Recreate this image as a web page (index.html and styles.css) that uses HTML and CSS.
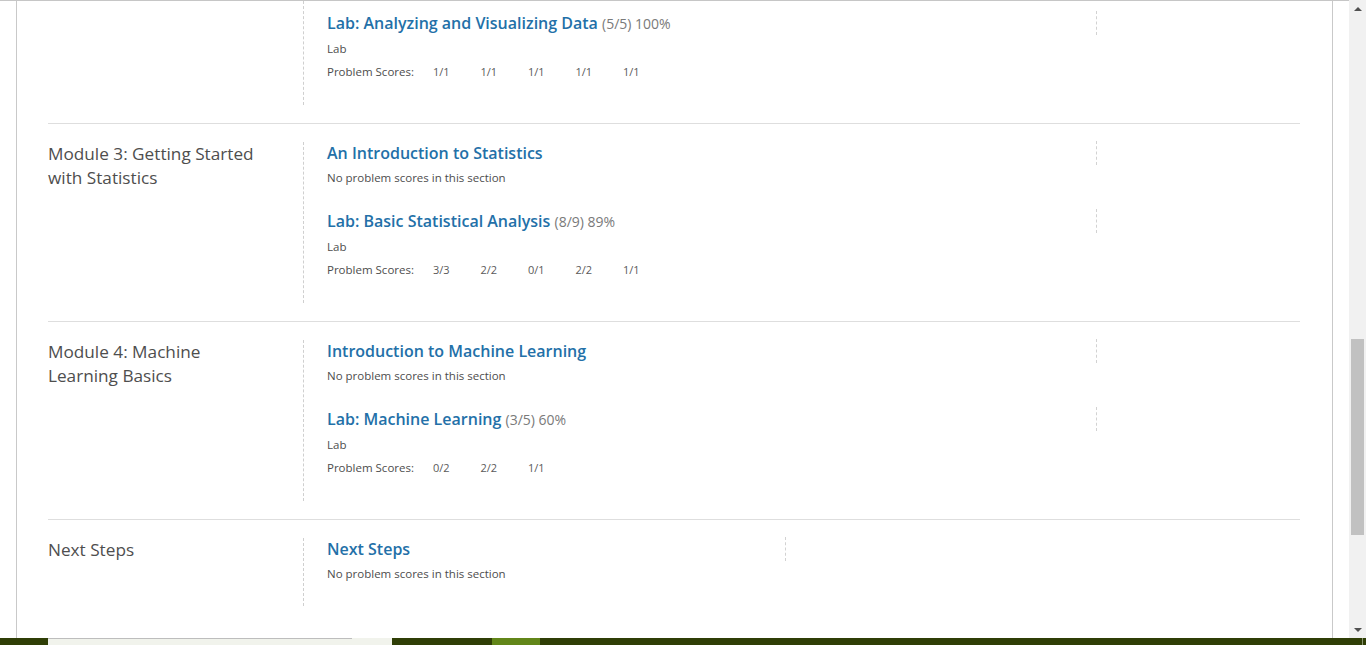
FILE: index.html
```html
<!DOCTYPE html>
<html lang="en">
<head>
<meta charset="utf-8">
<title>Progress</title>
<link rel="stylesheet" href="styles.css">
</head>
<body>
<div class="viewport">
  <div class="page">
    <main class="progress">
      <section class="chapter chapter--clipped">
        <h2 class="chapter-name"></h2>
        <div class="sections">
          <div class="section">
            <div class="section-header">
              <h3 class="section-title"><a href="#">Lab: Analyzing and Visualizing Data</a> <span class="section-score">(5/5) 100%</span></h3>
              <span class="marker"></span>
            </div>
            <p class="section-format">Lab</p>
            <dl class="scores"><dt>Problem Scores:</dt><dd>1/1</dd><dd>1/1</dd><dd>1/1</dd><dd>1/1</dd><dd>1/1</dd></dl>
          </div>
        </div>
      </section>

      <section class="chapter">
        <h2 class="chapter-name">Module 3: Getting Started with Statistics</h2>
        <div class="sections">
          <div class="section">
            <div class="section-header">
              <h3 class="section-title"><a href="#">An Introduction to Statistics</a></h3>
              <span class="marker"></span>
            </div>
            <p class="no-scores">No problem scores in this section</p>
          </div>
          <div class="section">
            <div class="section-header">
              <h3 class="section-title"><a href="#">Lab: Basic Statistical Analysis</a> <span class="section-score">(8/9) 89%</span></h3>
              <span class="marker"></span>
            </div>
            <p class="section-format">Lab</p>
            <dl class="scores"><dt>Problem Scores:</dt><dd>3/3</dd><dd>2/2</dd><dd>0/1</dd><dd>2/2</dd><dd>1/1</dd></dl>
          </div>
        </div>
      </section>

      <section class="chapter">
        <h2 class="chapter-name">Module 4: Machine Learning Basics</h2>
        <div class="sections">
          <div class="section">
            <div class="section-header">
              <h3 class="section-title"><a href="#">Introduction to Machine Learning</a></h3>
              <span class="marker"></span>
            </div>
            <p class="no-scores">No problem scores in this section</p>
          </div>
          <div class="section">
            <div class="section-header">
              <h3 class="section-title"><a href="#">Lab: Machine Learning</a> <span class="section-score">(3/5) 60%</span></h3>
              <span class="marker"></span>
            </div>
            <p class="section-format">Lab</p>
            <dl class="scores"><dt>Problem Scores:</dt><dd>0/2</dd><dd>2/2</dd><dd>1/1</dd></dl>
          </div>
        </div>
      </section>

      <section class="chapter chapter--last">
        <h2 class="chapter-name">Next Steps</h2>
        <div class="sections">
          <div class="section">
            <div class="section-header">
              <h3 class="section-title section-title--narrow"><a href="#">Next Steps</a></h3>
              <span class="marker"></span>
            </div>
            <p class="no-scores">No problem scores in this section</p>
          </div>
        </div>
      </section>
    </main>
  </div>
  <div class="scrollbar">
    <div class="scroll-btn"><span class="arrow-up"></span></div>
    <div class="scroll-track"><div class="scroll-thumb"></div></div>
    <div class="scroll-btn"><span class="arrow-down"></span></div>
  </div>
</div>
<footer class="taskbar">
  <span class="tb-seg tb-start"></span>
  <span class="tb-seg tb-search"></span>
  <span class="tb-seg tb-gap"></span>
  <span class="tb-seg tb-active"></span>
  <span class="tb-seg tb-fill"></span>
  <span class="tb-clock">12:13</span>
  <span class="tb-seg tb-end"></span>
</footer>
</body>
</html>
```

FILE: styles.css
```css
* { box-sizing: border-box; }

html, body {
  margin: 0;
  padding: 0;
  height: 645px;
  overflow: hidden;
  background: #ffffff;
  font-family: "Open Sans", "Noto Sans", "Liberation Sans", sans-serif;
}

.viewport {
  display: flex;
  height: 638px;
}

.page {
  flex: 1;
  border-top: 1px solid #c6c6c6;
  overflow: hidden;
}

.progress {
  margin-left: 16px;
  width: 1317px;
  height: 100%;
  border-left: 1px solid #c9c9c9;
  border-right: 1px solid #c9c9c9;
}

.chapter {
  display: flex;
  margin: 0 32px 0 31px;
  padding: 18px 0;
  border-bottom: 1px solid #dedede;
}

.chapter--clipped { padding-top: 0; }
.chapter--clipped .sections { padding-top: 11px; }

.chapter--last { border-bottom: none; }

.chapter-name {
  width: 255px;
  flex: none;
  margin: 0;
  padding-right: 35px;
  font-size: 17.2px;
  line-height: 24px;
  font-weight: 400;
  color: #4e4e4e;
}

.sections {
  flex: 1;
  border-left: 1px dashed #cfcfcf;
  padding-left: 23px;
}

.section { padding-bottom: 24px; }

.section-header {
  display: flex;
  align-items: flex-start;
  height: 22px;
}

.section-title {
  width: 769px;
  margin: 0;
  font-size: 16px;
  line-height: 22px;
  font-weight: 600;
}

.section-title--narrow { width: 458px; }

.section-title a {
  color: #2370a8;
  text-decoration: none;
}

.section-score {
  font-size: 14px;
  font-weight: 400;
  color: #7a7a7a;
}

.marker {
  display: block;
  width: 0;
  height: 24px;
  margin-top: -1px;
  border-left: 1px dashed #d2d2d2;
}

.no-scores,
.section-format {
  margin: 6px 0 0;
  font-size: 11.5px;
  line-height: 16px;
  color: #4d4d4d;
}

.section-format { margin-top: 7px; }

.scores {
  display: flex;
  margin: 7px 0 1px;
  font-size: 11.5px;
  line-height: 16px;
  color: #5a5a5a;
}

.scores dt {
  width: 106px;
  flex: none;
  color: #4d4d4d;
}

.scores dd {
  width: 47.5px;
  flex: none;
  margin: 0;
  font-size: 11px;
}

/* scrollbar */
.scrollbar {
  width: 17px;
  flex: none;
  display: flex;
  flex-direction: column;
  background: #f1f1f1;
}

.scroll-btn {
  height: 17px;
  flex: none;
  display: flex;
  align-items: center;
  justify-content: center;
}

.arrow-up {
  width: 0;
  height: 0;
  border-left: 4px solid transparent;
  border-right: 4px solid transparent;
  border-bottom: 4px solid #505050;
}

.arrow-down {
  width: 0;
  height: 0;
  border-left: 4px solid transparent;
  border-right: 4px solid transparent;
  border-top: 4px solid #505050;
}

.scroll-track {
  flex: 1;
  padding: 322px 2px 0;
}

.scroll-thumb {
  height: 196px;
  background: #c1c1c1;
}

/* taskbar */
.taskbar {
  display: flex;
  height: 7px;
  background: #2f3e06;
  overflow: hidden;
}

.tb-seg { display: block; height: 7px; flex: none; }
.tb-start { width: 48px; }
.tb-search {
  width: 344px;
  background-color: #f1f3ec;
  background-image: linear-gradient(#bdbdbd, #bdbdbd);
  background-size: 304px 1px;
  background-repeat: no-repeat;
  background-position: 0 0;
}
.tb-gap { width: 100px; }
.tb-active { width: 48px; background: #628619; }
.tb-fill { flex: 1; }
.tb-clock {
  flex: none;
  width: 100px;
  padding-left: 4px;
  padding-top: 5px;
  color: #ffffff;
  font-size: 12px;
  line-height: 14px;
  font-family: "Noto Sans", sans-serif;
}
.tb-end {
  width: 4px;
  border-left: 1px solid #8a9470;
}
```
